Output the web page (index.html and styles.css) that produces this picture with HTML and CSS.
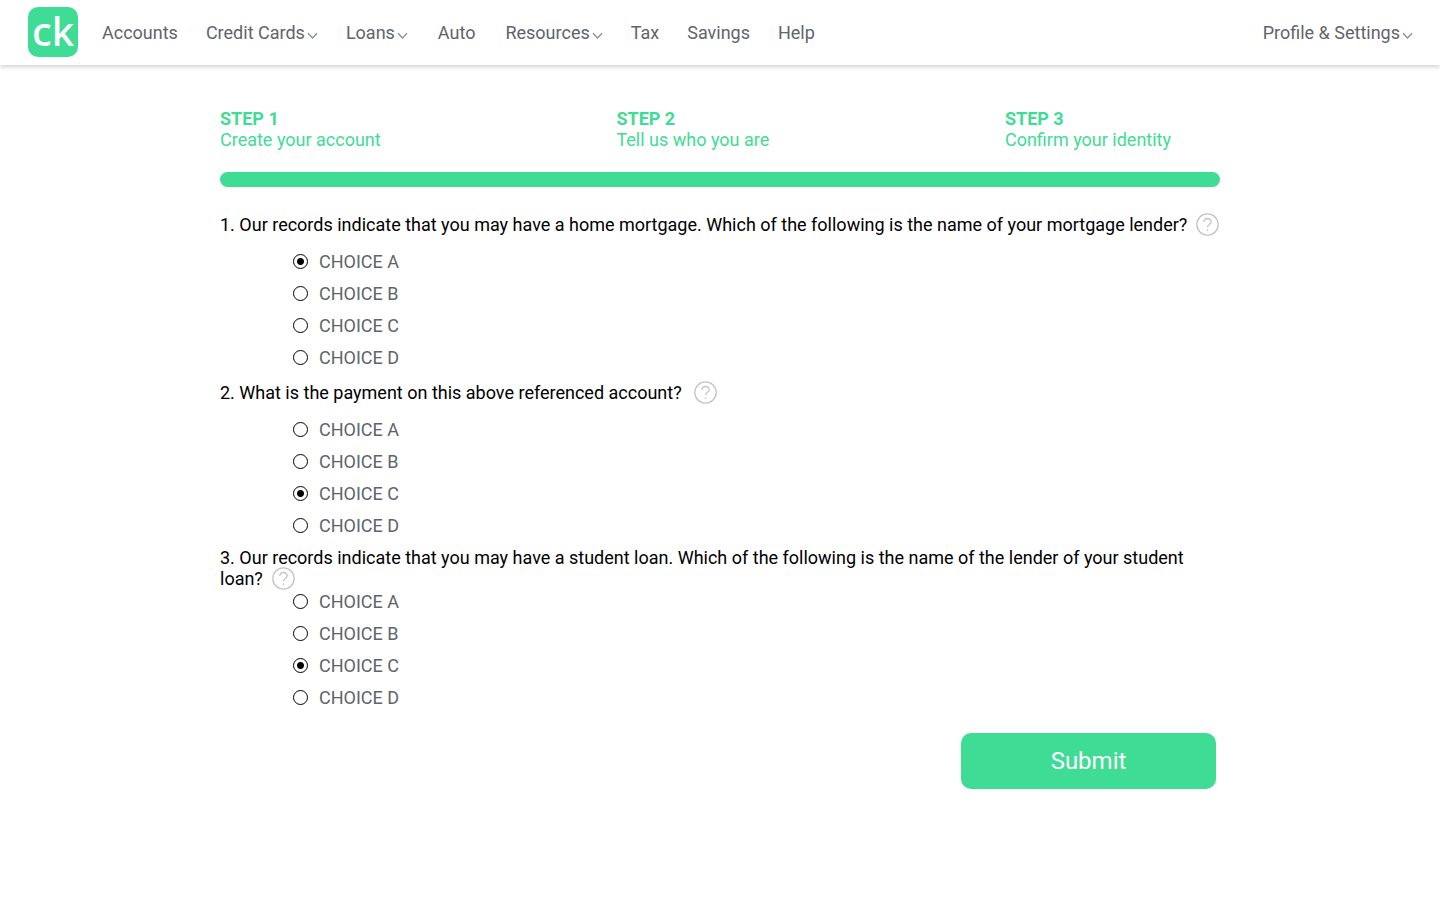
FILE: index.html
```html
<!DOCTYPE html>
<html lang="en">
<head>
<meta charset="utf-8">
<meta name="viewport" content="width=device-width, initial-scale=1">
<title>Confirm your identity</title>
<link rel="stylesheet" href="styles.css">
</head>
<body>
<svg width="0" height="0" class="sprite" aria-hidden="true">
  <symbol id="chevron" viewBox="0 0 11 8"><path d="M1 1.2 5.5 6 10 1.2"/></symbol>
  <symbol id="help" viewBox="0 0 23 23"><circle cx="11.5" cy="11.5" r="10.7"/><path d="M7.8 9c0-2.100 1.500-3.500 3.700-3.500s3.700 1.300 3.700 3.200c0 2.500-3.700 2.700-3.700 5.500M11.500 16.400v1.500"/></symbol>
</svg>
<header class="topbar">
  <a class="logo" href="#">ck</a>
  <nav class="nav">
    <a href="#">Accounts</a>
    <a href="#">Credit Cards<svg class="chevron"><use href="#chevron"/></svg></a>
    <a href="#">Loans<svg class="chevron"><use href="#chevron"/></svg></a>
    <a class="plain" href="#">Auto</a>
    <a href="#">Resources<svg class="chevron"><use href="#chevron"/></svg></a>
    <a href="#">Tax</a>
    <a href="#">Savings</a>
    <a href="#">Help</a>
  </nav>
  <a class="profile" href="#">Profile &amp; Settings<svg class="chevron"><use href="#chevron"/></svg></a>
</header>
<main class="page">
  <ol class="steps">
    <li><strong>STEP 1</strong>Create your account</li>
    <li><strong>STEP 2</strong>Tell us who you are</li>
    <li><strong>STEP 3</strong>Confirm your identity</li>
  </ol>
  <div class="progress"></div>
  <form>
    <fieldset class="question">
      <legend>1. Our records indicate that you may have a home mortgage. Which of the following is the name of your mortgage lender?<button type="button" class="help" aria-label="Help"><svg><use href="#help"/></svg></button></legend>
      <div class="choices">
        <label><input type="radio" name="q1" checked>CHOICE A</label>
        <label><input type="radio" name="q1">CHOICE B</label>
        <label><input type="radio" name="q1">CHOICE C</label>
        <label><input type="radio" name="q1">CHOICE D</label>
      </div>
    </fieldset>
    <fieldset class="question question-short">
      <legend>2. What is the payment on this above referenced account?<button type="button" class="help" aria-label="Help"><svg><use href="#help"/></svg></button></legend>
      <div class="choices">
        <label><input type="radio" name="q2">CHOICE A</label>
        <label><input type="radio" name="q2">CHOICE B</label>
        <label><input type="radio" name="q2" checked>CHOICE C</label>
        <label><input type="radio" name="q2">CHOICE D</label>
      </div>
    </fieldset>
    <fieldset class="question question-long">
      <legend>3. Our records indicate that you may have a student loan. Which of the following is the name of the lender of your student loan?<button type="button" class="help" aria-label="Help"><svg><use href="#help"/></svg></button></legend>
      <div class="choices">
        <label><input type="radio" name="q3">CHOICE A</label>
        <label><input type="radio" name="q3">CHOICE B</label>
        <label><input type="radio" name="q3" checked>CHOICE C</label>
        <label><input type="radio" name="q3">CHOICE D</label>
      </div>
    </fieldset>
    <div class="actions"><button type="submit" class="submit">Submit</button></div>
  </form>
</main>
</body>
</html>
```
FILE: styles.css
```css
* { box-sizing: border-box; }
body {
  margin: 0;
  background: #fff;
  color: #000;
  font: 18px/21px Roboto, sans-serif;
}
.sprite { position: absolute; }
a { color: inherit; text-decoration: none; }

.topbar {
  display: flex;
  align-items: center;
  padding: 7px 27px 8px 28px;
  color: #5f646b;
  box-shadow: 0 2px 4px rgba(0, 0, 0, 0.18);
}
.logo {
  width: 50px;
  height: 50px;
  margin-right: 24px;
  border-radius: 10px;
  background: #3fdc95;
  color: #fff;
  font: 500 40px/48px "Noto Sans", sans-serif;
  text-align: center;
}
.nav { display: flex; flex: 1; gap: 28px; }
.nav a, .profile { white-space: nowrap; }
.nav .plain { padding: 0 2px; }
.chevron {
  width: 11px;
  height: 8px;
  margin-left: 2px;
  vertical-align: -1px;
  fill: none;
  stroke: #8d9196;
  stroke-width: 1.4;
}

.page { max-width: 1000px; margin: 0 auto; padding-top: 43px; }
.steps {
  display: flex;
  justify-content: space-between;
  margin: 0 0 22px;
  padding: 0 49px 0 0;
  list-style: none;
  color: #3fdc95;
}
.steps strong { display: block; font-weight: 700; }
.progress {
  height: 15px;
  margin-bottom: 27px;
  border-radius: 8px;
  background: #3fdc95;
}

.question { min-width: 0; margin: 0 0 14px; padding: 0; border: 0; }
.question legend { display: block; width: 100%; margin-bottom: 16px; padding: 0; }
.question-short .help { margin-left: 12px; }
.question-long { margin-top: -3px; }
.question-long legend { margin-bottom: 2px; }
.help {
  width: 23px;
  height: 23px;
  margin: -2px 0 -2px 9px;
  padding: 0;
  border: 0;
  background: none;
  vertical-align: -5px;
}
.question-short .help { margin-left: 12px; }
.help svg {
  display: block;
  width: 23px;
  height: 23px;
  fill: none;
  stroke: #c4c4c4;
  stroke-width: 1.3;
}
.choices { display: grid; justify-items: start; gap: 11px; padding-left: 73px; }
.choices label {
  display: flex;
  align-items: center;
  gap: 11px;
  line-height: 21px;
  color: #5f646b;
}
.choices input {
  appearance: none;
  width: 15px;
  height: 15px;
  margin: 0;
  border: 1px solid #000;
  border-radius: 50%;
}
.choices input:checked { background: radial-gradient(circle, #000 3px, transparent 4px); }

.actions { display: flex; justify-content: flex-end; margin-top: 25px; padding-right: 4px; }
.submit {
  min-width: 255px;
  padding: 14px 24px;
  border: 0;
  border-radius: 10px;
  background: #3fdc95;
  color: #fff;
  font: 24px/28px Roboto, sans-serif;
}
```
